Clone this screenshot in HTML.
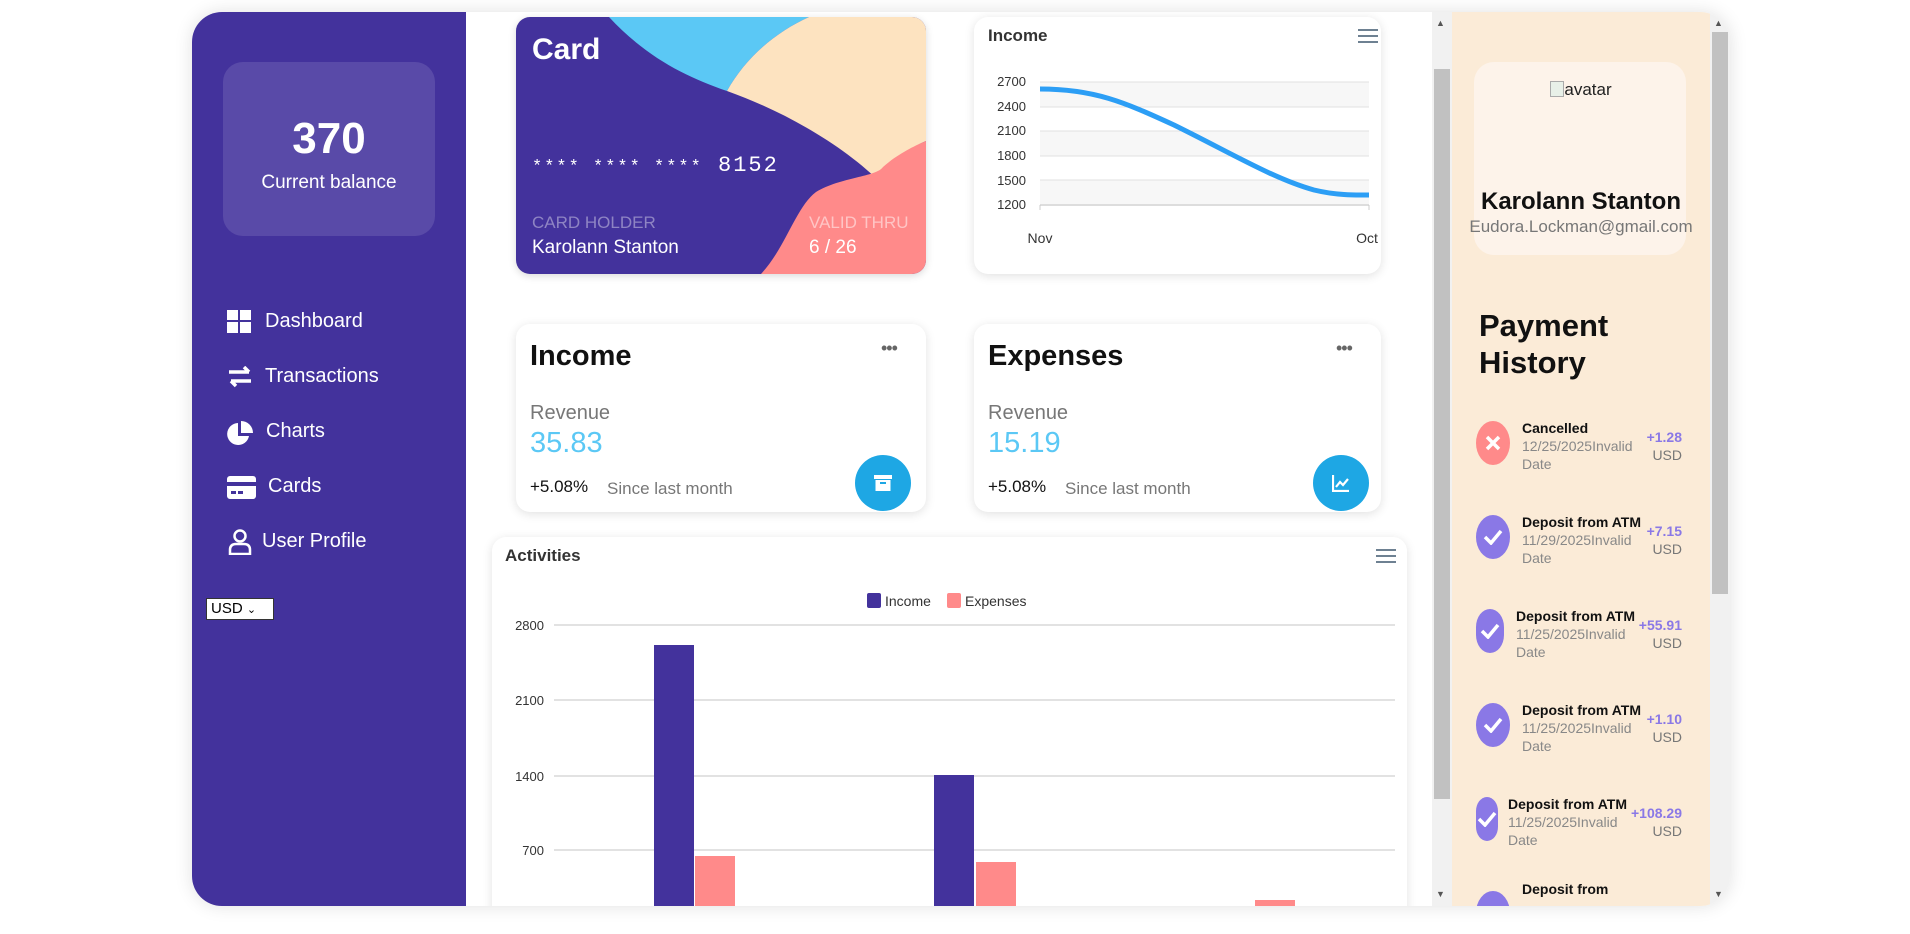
<!DOCTYPE html>
<html><head><meta charset="utf-8"><style>
*{margin:0;padding:0;box-sizing:border-box}
body{width:1910px;height:934px;background:#fff;font-family:"Liberation Sans",sans-serif;position:relative;overflow:hidden}
.a{position:absolute}
.wrap{left:192px;top:12px;width:1538px;height:894px;border-radius:30px;overflow:hidden;box-shadow:0 0 18px rgba(0,0,0,.12);background:#fff}
.side{left:0;top:0;width:274px;height:894px;background:#43329c}
.nav{color:#fff;font-size:20px}
.card{background:#fff;border-radius:14px;box-shadow:0 2px 10px rgba(0,0,0,.12)}
.t{white-space:nowrap}
.row .ic{width:34px;height:44px;border-radius:17px/22px;left:0;top:0}
.row .tt{left:46px;top:-1px;font-size:14px;font-weight:bold;color:#111}
.row .dd{left:46px;top:16px;font-size:14px;color:#888;line-height:18px;width:110px}
.row .am{right:0;top:8px;font-size:14px;font-weight:bold;color:#8a78e6;text-align:right}
.row .us{right:0;top:26px;font-size:14px;color:#777;text-align:right}
</style></head><body>
<div class="a wrap">
<div class="a side">
  <div class="a" style="left:31px;top:50px;width:212px;height:174px;border-radius:20px;background:rgba(255,255,255,.12)"></div>
  <div class="a t" style="left:31px;top:102px;width:212px;text-align:center;color:#fff;font-size:44px;font-weight:bold">370</div>
  <div class="a t" style="left:31px;top:160px;width:212px;text-align:center;color:#fff;font-size:19px">Current balance</div>
  <svg class="a" style="left:35px;top:298px" width="26" height="24"><rect x="0" y="0" width="11" height="10" fill="#fff"/><rect x="13" y="0" width="11" height="10" fill="#fff"/><rect x="0" y="12" width="11" height="11" fill="#fff"/><rect x="13" y="12" width="11" height="11" fill="#fff"/></svg>
  <div class="a t nav" style="left:73px;top:298px">Dashboard</div>
  <svg class="a" style="left:35px;top:354px" width="26" height="22"><path d="M2 6H22M17 1L22 6M24 15H4M9 20L4 15" stroke="#fff" stroke-width="3.5" fill="none"/></svg>
  <div class="a t nav" style="left:73px;top:353px">Transactions</div>
  <svg class="a" style="left:35px;top:409px" width="28" height="26"><path d="M11 2A11 11 0 1 0 22 15H11Z" fill="#fff"/><path d="M14 0A12 12 0 0 1 26 12H14Z" fill="#fff"/></svg>
  <div class="a t nav" style="left:74px;top:408px">Charts</div>
  <svg class="a" style="left:35px;top:464px" width="30" height="24"><rect x="0" y="0" width="29" height="23" rx="3" fill="#fff"/><rect x="0" y="6" width="29" height="4" fill="#43329c"/><rect x="4" y="15" width="5" height="3" fill="#43329c"/><rect x="11" y="15" width="5" height="3" fill="#43329c"/></svg>
  <div class="a t nav" style="left:76px;top:463px">Cards</div>
  <svg class="a" style="left:36px;top:517px" width="24" height="26"><circle cx="12" cy="7" r="5.5" stroke="#fff" stroke-width="2.5" fill="none"/><path d="M2 25V21Q2 15 8 15H16Q22 15 22 21V25Z" stroke="#fff" stroke-width="2.5" fill="none"/></svg>
  <div class="a t nav" style="left:70px;top:518px">User Profile</div>
  <div class="a" style="left:14px;top:586px;width:68px;height:22px;background:#fff;border:1px solid #333;font-size:15px;padding:1px 4px;color:#000">USD <span style="font-size:11px">&#8964;</span></div>
</div>

<div class="a" style="left:324px;top:5px;width:410px;height:257px;border-radius:14px;overflow:hidden;background:#43329c;box-shadow:0 2px 8px rgba(0,0,0,.15)">
  <svg class="a" style="left:0;top:0" width="410" height="257">
    <path d="M93 0C130 40 170 60 211 74C230 40 260 15 293 0Z" fill="#5bc8f5"/>
    <path d="M293 0H410V124C390 132 375 150 367 168C330 130 270 95 211 74C230 40 260 15 293 0Z" fill="#fde3c0"/>
    <path d="M410 124V257H245C270 230 280 190 300 175C325 160 360 160 367 150C380 138 400 128 410 124Z" fill="#ff8a8a"/>
  </svg>
  <div class="a t" style="left:16px;top:16px;color:#fff;font-size:30px;font-weight:bold">Card</div>
  <div class="a t" style="left:16px;top:136px;color:#fff;font-size:22px;letter-spacing:2px;font-family:'Liberation Mono',monospace"><span style="font-size:17px">****&nbsp;****&nbsp;****</span> 8152</div>
  <div class="a t" style="left:16px;top:196px;color:rgba(255,255,255,.4);font-size:17px">CARD HOLDER</div>
  <div class="a t" style="left:16px;top:220px;color:#fff;font-size:19px">Karolann Stanton</div>
  <div class="a t" style="left:293px;top:196px;color:rgba(255,255,255,.5);font-size:17px">VALID THRU</div>
  <div class="a t" style="left:293px;top:220px;color:#fff;font-size:19px">6 / 26</div>
</div>

<div class="a card" style="left:782px;top:5px;width:407px;height:257px">
  <div class="a t" style="left:14px;top:9px;font-size:17px;font-weight:bold;color:#333">Income</div>
  <svg class="a" style="left:384px;top:12px" width="20" height="14"><path d="M0 1H20M0 7H20M0 13H20" stroke="#6e8192" stroke-width="2"/></svg>
  <svg class="a" style="left:0;top:0" width="407" height="257">
    <rect x="66" y="65" width="329" height="25" fill="#f7f7f7"/>
    <rect x="66" y="114" width="329" height="25" fill="#f7f7f7"/>
    <rect x="66" y="163" width="329" height="25" fill="#f7f7f7"/>
    <g stroke="#e0e0e0"><path d="M66 65H395M66 90H395M66 114H395M66 139H395M66 163H395"/></g>
    <path d="M66 188H395" stroke="#ddd" stroke-width="2"/>
    <path d="M66 188V193M395 188V193" stroke="#ccc"/>
    <g font-size="13" fill="#333" text-anchor="end" font-family="Liberation Sans"><text x="52" y="69">2700</text><text x="52" y="94">2400</text><text x="52" y="118">2100</text><text x="52" y="143">1800</text><text x="52" y="168">1500</text><text x="52" y="192">1200</text></g>
    <g font-size="14" fill="#333" font-family="Liberation Sans" text-anchor="middle"><text x="66" y="226">Nov</text><text x="393" y="226">Oct</text></g>
    <path d="M66 72C120 72 150 85 200 108C255 135 300 162 340 173C365 179 385 178 395 178" stroke="#2c9ef5" stroke-width="5" fill="none"/>
  </svg>
</div>

<div class="a card" style="left:324px;top:312px;width:410px;height:188px">
  <div class="a t" style="left:14px;top:16px;font-size:29px;font-weight:bold;color:#111">Income</div>
  <div class="a t" style="left:365px;top:14px;font-size:18px;color:#666;letter-spacing:-1px">•••</div>
  <div class="a t" style="left:14px;top:78px;font-size:20px;color:#777">Revenue</div>
  <div class="a t" style="left:14px;top:103px;font-size:29px;color:#5bc8f5">35.83</div>
  <div class="a t" style="left:14px;top:153px;font-size:17px;color:#111">+5.08%</div>
  <div class="a t" style="left:91px;top:155px;font-size:17px;color:#777">Since last month</div>
  <div class="a" style="left:339px;top:131px;width:56px;height:56px;border-radius:50%;background:#1ea7e4"></div>
  <svg class="a" style="left:358px;top:150px" width="18" height="18"><rect x="0" y="1" width="18" height="4" fill="#fff"/><rect x="1.5" y="6" width="15" height="11" fill="#fff"/><rect x="6" y="8" width="6" height="2" fill="#1ea7e4"/></svg>
</div>
<div class="a card" style="left:782px;top:312px;width:407px;height:188px">
  <div class="a t" style="left:14px;top:16px;font-size:29px;font-weight:bold;color:#111">Expenses</div>
  <div class="a t" style="left:362px;top:14px;font-size:18px;color:#666;letter-spacing:-1px">•••</div>
  <div class="a t" style="left:14px;top:78px;font-size:20px;color:#777">Revenue</div>
  <div class="a t" style="left:14px;top:103px;font-size:29px;color:#5bc8f5">15.19</div>
  <div class="a t" style="left:14px;top:153px;font-size:17px;color:#111">+5.08%</div>
  <div class="a t" style="left:91px;top:155px;font-size:17px;color:#777">Since last month</div>
  <div class="a" style="left:339px;top:131px;width:56px;height:56px;border-radius:50%;background:#1ea7e4"></div>
  <svg class="a" style="left:358px;top:150px" width="18" height="18"><path d="M1 1V17H17" stroke="#fff" stroke-width="2.2" fill="none"/><path d="M4 13L8 8L11 11L16 5" stroke="#fff" stroke-width="2.2" fill="none"/></svg>
</div>

<div class="a card" style="left:300px;top:525px;width:915px;height:380px;border-radius:14px 14px 0 0">
  <div class="a t" style="left:13px;top:9px;font-size:17px;font-weight:bold;color:#333">Activities</div>
  <svg class="a" style="left:884px;top:12px" width="20" height="14"><path d="M0 1H20M0 7H20M0 13H20" stroke="#6e8192" stroke-width="2"/></svg>
  <svg class="a" style="left:0;top:0" width="915" height="380">
    <rect x="375" y="56" width="14" height="15" rx="2" fill="#43329c"/>
    <rect x="455" y="56" width="14" height="15" rx="2" fill="#ff8a8a"/>
    <g font-size="14" fill="#333" font-family="Liberation Sans"><text x="393" y="69">Income</text><text x="473" y="69">Expenses</text></g>
    <g stroke="#e2e2e2" stroke-width="2"><path d="M62 88H903M62 163H903M62 239H903M62 313H903"/></g>
    <g font-size="13" fill="#333" text-anchor="end" font-family="Liberation Sans"><text x="52" y="93">2800</text><text x="52" y="168">2100</text><text x="52" y="244">1400</text><text x="52" y="318">700</text></g>
    <rect x="162" y="108" width="40" height="290" fill="#43329c"/>
    <rect x="203" y="319" width="40" height="70" fill="#ff8a8a"/>
    <rect x="442" y="238" width="40" height="150" fill="#43329c"/>
    <rect x="484" y="325" width="40" height="70" fill="#ff8a8a"/>
    <rect x="763" y="363" width="40" height="30" fill="#ff8a8a"/>
  </svg>
</div>

<div class="a" style="left:1240px;top:0;width:20px;height:894px;background:#f1f1f1"></div>
<div class="a" style="left:1242px;top:57px;width:16px;height:730px;background:#c1c1c1"></div>
<div class="a t" style="left:1244px;top:6px;font-size:9px;color:#555">▲</div>
<div class="a t" style="left:1244px;top:877px;font-size:9px;color:#555">▼</div>

<div class="a" style="left:1260px;top:0;width:258px;height:894px;background:#fbebd7">
  <div class="a" style="left:22px;top:50px;width:212px;height:193px;border-radius:20px;background:#fdf3ea"></div>
  <div class="a t" style="left:0;top:68px;width:258px;text-align:center;font-size:17px;color:#222"><span style="display:inline-block;width:14px;height:16px;border:1px solid #aaa;vertical-align:-2px;background:#e8f0e8"></span>avatar</div>
  <div class="a t" style="left:0;top:176px;width:258px;text-align:center;font-size:24px;font-weight:bold;color:#111">Karolann Stanton</div>
  <div class="a t" style="left:0;top:205px;width:258px;text-align:center;font-size:17px;color:#777">Eudora.Lockman@gmail.com</div>
  <div class="a" style="left:27px;top:295px;font-size:31px;font-weight:bold;color:#111;line-height:37px">Payment<br>History</div>

  <div class="a row" style="left:24px;top:409px;width:206px;height:50px">
    <div class="a ic" style="background:#ff8a8a"></div>
    <svg class="a" style="left:9px;top:14px" width="16" height="16"><path d="M2 2L14 14M14 2L2 14" stroke="#fff" stroke-width="3.5"/></svg>
    <div class="a t tt">Cancelled</div><div class="a dd">12/25/2025Invalid Date</div>
    <div class="a t am">+1.28</div><div class="a t us">USD</div>
  </div>
  <div class="a row" style="left:24px;top:503px;width:206px;height:50px">
    <div class="a ic" style="background:#8a78e6"></div>
    <svg class="a" style="left:7px;top:14px" width="20" height="16"><path d="M2 8L8 14L18 2" stroke="#fff" stroke-width="3.5" fill="none"/></svg>
    <div class="a t tt">Deposit from ATM</div><div class="a dd">11/29/2025Invalid Date</div>
    <div class="a t am">+7.15</div><div class="a t us">USD</div>
  </div>
  <div class="a row" style="left:24px;top:597px;width:206px;height:50px">
    <div class="a ic" style="background:#8a78e6;width:28px"></div>
    <svg class="a" style="left:4px;top:14px" width="20" height="16"><path d="M2 8L8 14L18 2" stroke="#fff" stroke-width="3.5" fill="none"/></svg>
    <div class="a t tt" style="left:40px">Deposit from ATM</div><div class="a dd" style="left:40px">11/25/2025Invalid Date</div>
    <div class="a t am">+55.91</div><div class="a t us">USD</div>
  </div>
  <div class="a row" style="left:24px;top:691px;width:206px;height:50px">
    <div class="a ic" style="background:#8a78e6"></div>
    <svg class="a" style="left:7px;top:14px" width="20" height="16"><path d="M2 8L8 14L18 2" stroke="#fff" stroke-width="3.5" fill="none"/></svg>
    <div class="a t tt">Deposit from ATM</div><div class="a dd">11/25/2025Invalid Date</div>
    <div class="a t am">+1.10</div><div class="a t us">USD</div>
  </div>
  <div class="a row" style="left:24px;top:785px;width:206px;height:50px">
    <div class="a ic" style="background:#8a78e6;width:22px"></div>
    <svg class="a" style="left:1px;top:14px" width="20" height="16"><path d="M2 8L8 14L18 2" stroke="#fff" stroke-width="3.5" fill="none"/></svg>
    <div class="a t tt" style="left:32px">Deposit from ATM</div><div class="a dd" style="left:32px">11/25/2025Invalid Date</div>
    <div class="a t am">+108.29</div><div class="a t us">USD</div>
  </div>
  <div class="a row" style="left:24px;top:879px;width:206px;height:50px">
    <div class="a ic" style="background:#8a78e6"></div>
    <div class="a t tt" style="top:-10px">Deposit from</div>
  </div>
</div>
<div class="a" style="left:1518px;top:0;width:20px;height:894px;background:#f1f1f1"></div>
<div class="a" style="left:1520px;top:20px;width:16px;height:562px;background:#c1c1c1"></div>
<div class="a t" style="left:1522px;top:6px;font-size:9px;color:#555">▲</div>
<div class="a t" style="left:1522px;top:877px;font-size:9px;color:#555">▼</div>
</div>
</body></html>
